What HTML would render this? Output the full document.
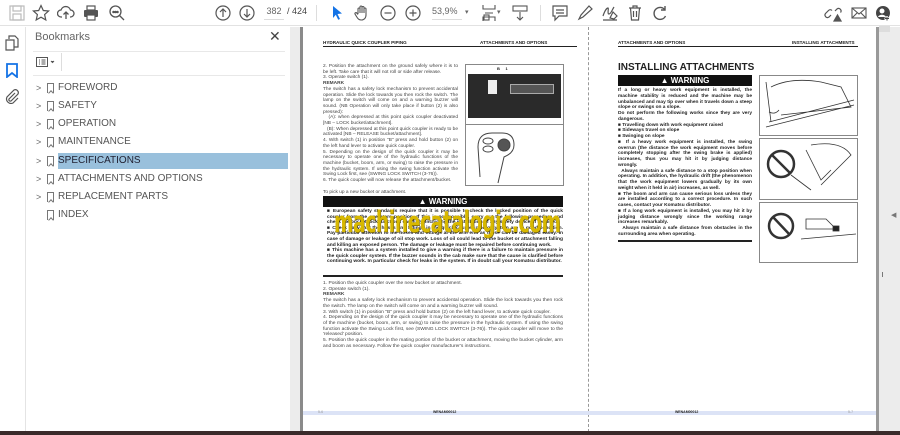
<!DOCTYPE html>
<html><head><meta charset="utf-8"><style>
*{margin:0;padding:0;box-sizing:border-box}
body{width:900px;height:435px;overflow:hidden;background:#fff;font-family:"Liberation Sans",sans-serif;position:relative}
.a{position:absolute}
.tb{left:0;top:0;width:900px;height:26px;background:#fff;border-bottom:1px solid #e2e2e2}
.ic{position:absolute;top:4px}
.bm{position:absolute;left:36px;font-size:10px;color:#555;height:16px;line-height:16px}
.bm .ch{position:absolute;left:0;top:0;font-size:9px;color:#666}
.bm .bk{position:absolute;left:11px;top:3px;width:7px;height:10px;border:1.2px solid #777;border-bottom:none}
.bm .bk:after{content:"";position:absolute;left:0.5px;bottom:-2px;width:3px;height:3px;border-left:1.2px solid #777;border-top:1.2px solid #777;transform:rotate(45deg)}
.bm .t{position:absolute;left:22px;top:0;white-space:nowrap}
.pg{font-size:4.8px;line-height:5.7px;color:#444;text-align:justify}
.hd{font-size:4.6px;font-weight:bold;color:#222}
.warn{background:#111;color:#fff;font-weight:bold;text-align:center}
.box{border:1px solid #888;background:#fff}
</style></head><body>
<div class="a tb">
<svg class="ic" style="left:8px" width="18" height="18" viewBox="0 0 18 18" fill="none" stroke="#bbb" stroke-width="1.2"><rect x="2" y="2" width="14" height="14"/><rect x="5" y="2" width="8" height="5"/><rect x="5" y="10" width="8" height="6"/></svg>
<svg class="ic" style="left:32px" width="18" height="18" viewBox="0 0 18 18" fill="none" stroke="#555" stroke-width="1.2"><path d="M9 1.5l2.3 5 5.3.5-4 3.6 1.2 5.3L9 13.2l-4.8 2.7 1.2-5.3-4-3.6 5.3-.5z"/></svg>
<svg class="ic" style="left:57px" width="18" height="18" viewBox="0 0 18 18" fill="none" stroke="#555" stroke-width="1.3"><path d="M5 13H4a3.5 3.5 0 010-7 5 5 0 019.5 0 3.5 3.5 0 010 7H13M9 15V8M6.5 10.5L9 8l2.5 2.5"/></svg>
<svg class="ic" style="left:82px" width="18" height="18" viewBox="0 0 18 18"><rect x="5" y="2" width="8" height="4" fill="none" stroke="#555" stroke-width="1.2"/><rect x="2" y="6" width="14" height="7" rx="1" fill="#555"/><rect x="5" y="11" width="8" height="5" fill="#fff" stroke="#555" stroke-width="1.2"/></svg>
<svg class="ic" style="left:108px" width="18" height="18" viewBox="0 0 18 18" fill="none" stroke="#555" stroke-width="1.3"><circle cx="7.5" cy="7.5" r="5.5"/><path d="M11.5 11.5L16 16"/><circle cx="5.5" cy="8" r=".6" fill="#555"/><circle cx="7.5" cy="8" r=".6" fill="#555"/><circle cx="9.5" cy="8" r=".6" fill="#555"/></svg>
<svg class="ic" style="left:214px" width="18" height="18" viewBox="0 0 18 18" fill="none" stroke="#555" stroke-width="1.2"><circle cx="9" cy="9" r="7"/><path d="M9 13V5M6 8l3-3 3 3"/></svg>
<svg class="ic" style="left:238px" width="18" height="18" viewBox="0 0 18 18" fill="none" stroke="#555" stroke-width="1.2"><circle cx="9" cy="9" r="7"/><path d="M9 5v8M6 10l3 3 3-3"/></svg>
<div class="a" style="left:264px;top:6px;width:20px;height:14px;font-size:9px;color:#666;border-bottom:1px solid #ddd;text-align:center">382</div>
<div class="a" style="left:287px;top:6px;font-size:9px;color:#444">/ 424</div>
<div class="a" style="left:316px;top:5px;width:1px;height:16px;background:#ddd"></div>
<svg class="ic" style="left:328px" width="18" height="18" viewBox="0 0 18 18"><path d="M5 2l9 7.5-4.5.5 2.5 5-1.8.8-2.4-5L5 14z" fill="#1473e6"/></svg>
<svg class="ic" style="left:353px" width="18" height="18" viewBox="0 0 18 18" fill="none" stroke="#555" stroke-width="1.1"><path d="M5 10V5a1 1 0 012 0v4V3a1 1 0 012 0v6V3.5a1 1 0 012 0V9V5a1 1 0 012 0v6c0 3-2 5-4.5 5S5 15 3.5 12.5L2 10a1 1 0 011.7-1L5 10.5"/></svg>
<svg class="ic" style="left:379px" width="18" height="18" viewBox="0 0 18 18" fill="none" stroke="#555" stroke-width="1.2"><circle cx="9" cy="9" r="7"/><path d="M5.5 9h7"/></svg>
<svg class="ic" style="left:404px" width="18" height="18" viewBox="0 0 18 18" fill="none" stroke="#555" stroke-width="1.2"><circle cx="9" cy="9" r="7"/><path d="M5.5 9h7M9 5.5v7"/></svg>
<div class="a" style="left:432px;top:6px;width:30px;height:14px;font-size:9px;color:#666;border-bottom:1px solid #ddd">53,9%</div>
<div class="a" style="left:465px;top:8px;font-size:7px;color:#666">▾</div>
<svg class="ic" style="left:481px" width="16" height="18" viewBox="0 0 16 18" fill="none" stroke="#555" stroke-width="1.1"><path d="M2 1v4h12V1M2 17v-4h12v4M4 9h8"/><rect x="3" y="11" width="5" height="5"/></svg>
<div class="a" style="left:497px;top:8px;font-size:7px;color:#666">▾</div>
<svg class="ic" style="left:511px" width="18" height="18" viewBox="0 0 18 18" fill="none" stroke="#555" stroke-width="1.1"><rect x="2" y="2" width="14" height="5"/><path d="M9 8v8M6 13l3 3 3-3"/></svg>
<div class="a" style="left:540px;top:5px;width:1px;height:16px;background:#ddd"></div>
<svg class="ic" style="left:551px" width="18" height="18" viewBox="0 0 18 18" fill="none" stroke="#555" stroke-width="1.2"><path d="M2 2h14v10H8l-4 4v-4H2z"/><path d="M5 6h8M5 9h8"/></svg>
<svg class="ic" style="left:576px" width="18" height="18" viewBox="0 0 18 18" fill="none" stroke="#555" stroke-width="1.2"><path d="M3 15l2-4 8-9 3 3-9 8z"/></svg>
<svg class="ic" style="left:601px" width="18" height="18" viewBox="0 0 18 18" fill="none" stroke="#555" stroke-width="1.2"><path d="M2 12c2-6 4-8 5-8s-1 6 1 6 3-4 5-7M9 14l3-6 4 4-3 3zM2 16h14"/></svg>
<svg class="ic" style="left:626px" width="18" height="18" viewBox="0 0 18 18" fill="none" stroke="#555" stroke-width="1.2"><path d="M3 4h12M7 4V2h4v2M4.5 4l1 12h7l1-12M7.5 7v6M10.5 7v6"/></svg>
<svg class="ic" style="left:651px" width="18" height="18" viewBox="0 0 18 18" fill="none" stroke="#555" stroke-width="1.4"><path d="M14 6a6 6 0 10.5 6"/><path d="M14 2v4h-4"/></svg>
<svg class="ic" style="left:824px" width="18" height="18" viewBox="0 0 18 18" fill="none" stroke="#555" stroke-width="1.2"><path d="M7 11l-2 2a2.5 2.5 0 01-3.5-3.5l3-3a2.5 2.5 0 013.5 0M11 7l2-2a2.5 2.5 0 013.5 3.5"/><path d="M10 17l3.5-6 3.5 6z" fill="#555"/></svg>
<svg class="ic" style="left:850px" width="18" height="18" viewBox="0 0 18 18" fill="none" stroke="#555" stroke-width="1.1"><rect x="2" y="4" width="14" height="10"/><path d="M2 4l7 6 7-6M2 14l5-5M16 14l-5-5"/></svg>
<svg class="ic" style="left:874px" width="18" height="18" viewBox="0 0 18 18"><circle cx="9" cy="9" r="7" fill="#444"/><circle cx="8" cy="7" r="2.5" fill="#fff"/><path d="M4 13c1-3 7-3 8 0" fill="#fff"/><path d="M13 12v5M10.5 14.5h5" stroke="#fff" stroke-width="2"/><path d="M13 12.5v4M11 14.5h4" stroke="#444" stroke-width="1"/></svg>
</div>
<div class="a" style="left:0;top:27px;width:26px;height:405px;background:#fff;border-right:1px solid #e4e4e4"></div>
<svg class="a" style="left:5px;top:35px" width="14" height="16" viewBox="0 0 14 16" fill="none" stroke="#555" stroke-width="1.2"><path d="M4 4V1h6l3 3v8H9"/><path d="M1 5h8v10H1z"/></svg>
<svg class="a" style="left:6px;top:63px" width="12" height="15" viewBox="0 0 12 15" fill="none" stroke="#1473e6" stroke-width="1.8"><path d="M1 1h10v13l-5-4-5 4z"/></svg>
<svg class="a" style="left:4px;top:88px" width="16" height="16" viewBox="0 0 16 16" fill="none" stroke="#555" stroke-width="1.2"><path d="M11 5l-6 6a1.5 1.5 0 002 2l7-7a3 3 0 00-4-4l-7 7a4.5 4.5 0 006 6l5-5"/></svg>
<div class="a" style="left:27px;top:27px;width:263px;height:405px;background:#fff"></div>
<div class="a" style="left:35px;top:31px;font-size:11px;color:#666">Bookmarks</div>
<div class="a" style="left:269px;top:28px;font-size:14px;color:#444">✕</div>
<div class="a" style="left:33px;top:51px;width:252px;height:1px;background:#e8e8e8"></div>
<svg class="a" style="left:36px;top:56px" width="24" height="12" viewBox="0 0 24 12" fill="none" stroke="#555" stroke-width="1"><rect x=".5" y="1.5" width="11" height="9"/><path d="M3 4h1M3 6h1M3 8h1M5.5 4h4M5.5 6h4M5.5 8h4"/><path d="M15 5l1.5 1.5L18 5" fill="#555"/></svg>
<div class="a" style="left:61px;top:53px;width:1px;height:18px;background:#ddd"></div>
<div class="a" style="left:33px;top:75px;width:252px;height:1px;background:#e8e8e8"></div>
<div class="a" style="left:58px;top:153px;width:230px;height:16px;background:#99c0dc"></div>
<div class="bm" style="top:80px"><span class="ch">&gt;</span><span class="bk"></span><span class="t">FOREWORD</span></div>
<div class="bm" style="top:98px"><span class="ch">&gt;</span><span class="bk"></span><span class="t">SAFETY</span></div>
<div class="bm" style="top:116px"><span class="ch">&gt;</span><span class="bk"></span><span class="t">OPERATION</span></div>
<div class="bm" style="top:134px"><span class="ch">&gt;</span><span class="bk"></span><span class="t">MAINTENANCE</span></div>
<div class="bm" style="top:153px"><span class="ch">&gt;</span><span class="bk"></span><span class="t" style="color:#223">SPECIFICATIONS</span></div>
<div class="bm" style="top:171px"><span class="ch">&gt;</span><span class="bk"></span><span class="t">ATTACHMENTS AND OPTIONS</span></div>
<div class="bm" style="top:189px"><span class="ch">&gt;</span><span class="bk"></span><span class="t">REPLACEMENT PARTS</span></div>
<div class="bm" style="top:207px"><span class="bk"></span><span class="t">INDEX</span></div>
<div class="a" style="left:290px;top:27px;width:10px;height:405px;background:#ececec"></div>
<div class="a" style="left:300px;top:27px;width:3px;height:405px;background:#8a8a8a"></div>
<div class="a" style="left:303px;top:27px;width:573px;height:405px;background:#fff"></div>
<div class="a" style="left:588px;top:27px;width:0;height:405px;border-left:1px dashed #999"></div>
<div class="a" style="left:876px;top:27px;width:3px;height:405px;background:#999"></div>
<div class="a" style="left:879px;top:27px;width:21px;height:405px;background:#ececec"></div>
<div class="a" style="left:879px;top:26px;width:11px;height:6px;background:#ddd"></div>
<div class="a" style="left:891px;top:211px;font-size:7px;color:#777">◀</div>
<div class="a" style="left:882px;top:272px;width:1px;height:5px;background:#777"></div>
<div class="a" style="left:0;top:431px;width:900px;height:4px;background:#3a2b2b"></div>
<div class="a" style="left:303px;top:411px;width:573px;height:4px;background:#dce3f6"></div>
<div class="a hd" style="left:318px;top:410px;font-size:3.5px;color:#999;font-weight:normal">5-6</div>
<div class="a hd" style="left:433px;top:410px;font-size:3.5px">WENAM00012</div>
<div class="a hd" style="left:675px;top:410px;font-size:3.5px">WENAM00012</div>
<div class="a hd" style="left:848px;top:410px;font-size:3.5px;color:#999;font-weight:normal">5-7</div>

<div class="a hd" style="left:323px;top:40px">HYDRAULIC QUICK COUPLER PIPING</div>
<div class="a hd" style="left:480px;top:40px">ATTACHMENTS AND OPTIONS</div>
<div class="a" style="left:323px;top:46px;width:254px;height:1px;background:#222"></div>
<div class="a pg" style="left:323px;top:64px;width:135px">
2. Position the attachment on the ground safely where it is to be left. Take care that it will not roll or side after release.<br>3. Operate switch (1).<br><b>REMARK</b><br>The switch has a safety lock mechanism to prevent accidental operation. Slide the lock towards you then rock the switch. The lamp on the switch will come on and a warning buzzer will sound. (NB Operation will only take place if button (2) is also pressed):<br>&nbsp;&nbsp;&nbsp;(A): when depressed at this point quick coupler deactivated [NB – LOCK bucket/attachment].<br>&nbsp;&nbsp;&nbsp;(B): When depressed at this point quick coupler is ready to be activated [NB – RELEASE bucket/attachment].<br>4. With switch (1) in position "B" press and hold button (2) on the left hand lever to activate quick coupler.<br>5. Depending on the design of the quick coupler it may be necessary to operate one of the hydraulic functions of the machine (bucket, boom, arm, or swing) to raise the pressure in the hydraulic system. If using the swing function activate the Swing Lock first, see (SWING LOCK SWITCH (3-76)).<br>6. The quick coupler will now release the attachment/bucket.</div>
<div class="a box" style="left:465px;top:64px;width:99px;height:61px"></div>
<div class="a" style="left:468px;top:74px;width:93px;height:44px;background:#2a2a2a"></div>
<div class="a" style="left:510px;top:84px;width:44px;height:10px;background:#555;border:1px solid #aaa"></div>
<div class="a" style="left:488px;top:80px;width:9px;height:14px;background:#eee"></div>
<div class="a hd" style="left:497px;top:66px;font-size:4px">B&nbsp;&nbsp;&nbsp;&nbsp;&nbsp;1</div>
<div class="a box" style="left:465px;top:124px;width:99px;height:62px"></div>
<svg class="a" style="left:470px;top:127px" width="60" height="58" viewBox="0 0 60 58" fill="none" stroke="#444" stroke-width="1"><path d="M10 50L8 20q0-14 14-14h10q12 0 12 12 0 8-10 12l-6 26"/><circle cx="34" cy="18" r="6" fill="#555"/><ellipse cx="18" cy="14" rx="5" ry="3"/><ellipse cx="18" cy="22" rx="5" ry="3"/></svg>
<div class="a pg" style="left:323px;top:190px">To pick up a new bucket or attachment.</div>
<div class="a warn" style="left:323px;top:196px;width:240px;height:11px;font-size:8px;line-height:11px">▲ WARNING</div>
<div class="a pg" style="left:327px;top:209px;width:236px;font-weight:bold;color:#222;line-height:5.6px;font-size:4.9px">
■ European safety standards require that it is possible to check the locked position of the quick coupler from the operators position. If this is not possible, carry out the following procedure and check the bucket lock functions carefully, including the installation of any safety device, if required.<br>■ Check daily that the hoses and fittings in the quick coupler piping system are in good condition. Pay particular attention to the hoses and fittings at the arm end as these can be damaged easily. In case of damage or leakage of oil stop work. Loss of oil could lead to the bucket or attachment falling and killing an exposed person. The damage or leakage must be repaired before continuing work.<br>■ This machine has a system installed to give a warning if there is a failure to maintain pressure in the quick coupler system. If the buzzer sounds in the cab make sure that the cause is clarified before continuing work. In particular check for leaks in the system. If in doubt call your Komatsu distributor.</div>
<div class="a" style="left:323px;top:275px;width:240px;height:2px;background:#222"></div>
<div class="a pg" style="left:323px;top:281px;width:240px;font-size:4.9px">
1. Position the quick coupler over the new bucket or attachment.<br>2. Operate switch (1).<br><b>REMARK</b><br>The switch has a safety lock mechanism to prevent accidental operation. Slide the lock towards you then rock the switch. The lamp on the switch will come on and a warning buzzer will sound.<br>3. With switch (1) in position "B" press and hold button (2) on the left hand lever, to activate quick coupler.<br>4. Depending on the design of the quick coupler it may be necessary to operate one of the hydraulic functions of the machine (bucket, boom, arm, or swing) to raise the pressure in the hydraulic system. If using the swing function activate the Swing Lock first, see (SWING LOCK SWITCH (3-76)). The quick coupler will move to the 'released' position.<br>5. Position the quick coupler in the mating portion of the bucket or attachment, moving the bucket cylinder, arm and boom as necessary. Follow the quick coupler manufacturer's instructions.</div>
<div class="a" style="left:334px;top:205px;font-size:29px;font-weight:bold;font-family:'DejaVu Sans',sans-serif;color:#d8b800;letter-spacing:-0.5px;text-shadow:0.6px 0.6px 0 #4a3c00;white-space:nowrap;transform:scaleX(0.64);transform-origin:0 0">machinecatalogic.com</div>

<div class="a hd" style="left:618px;top:40px">ATTACHMENTS AND OPTIONS</div>
<div class="a hd" style="left:792px;top:40px">INSTALLING ATTACHMENTS</div>
<div class="a" style="left:618px;top:46px;width:240px;height:1px;background:#222"></div>
<div class="a" style="left:618px;top:62px;font-size:10px;font-weight:bold;color:#222">INSTALLING ATTACHMENTS</div>
<div class="a warn" style="left:618px;top:75px;width:134px;height:11px;font-size:8px;line-height:11px">▲ WARNING</div>
<div class="a pg" style="left:618px;top:88px;width:134px;font-weight:bold;color:#222;line-height:5.75px;font-size:4.8px">
If a long or heavy work equipment is installed, the machine stability is reduced and the machine may be unbalanced and may tip over when it travels down a steep slope or swings on a slope.<br>Do not perform the following works since they are very dangerous.<br>■ Travelling down with work equipment raised<br>■ Sideways travel on slope<br>■ Swinging on slope<br>■ If a heavy work equipment is installed, the swing overrun (the distance the work equipment moves before completely stopping after the swing brake is applied) increases, thus you may hit it by judging distance wrongly.<br>&nbsp;&nbsp;Always maintain a safe distance to a stop position when operating. In addition, the hydraulic drift (the phenomenon that the work equipment lowers gradually by its own weight when it held in air) increases, as well.<br>■ The boom and arm can cause serious loss unless they are installed according to a correct procedure. In such cases, contact your Komatsu distributor.<br>■ If a long work equipment is installed, you may hit it by judging distance wrongly since the working range increases remarkably.<br>&nbsp;&nbsp;Always maintain a safe distance from obstacles in the surrounding area when operating.</div>
<div class="a" style="left:618px;top:240px;width:134px;height:2px;background:#222"></div>
<div class="a box" style="left:759px;top:75px;width:99px;height:61px"></div>
<svg class="a" style="left:761px;top:77px" width="95" height="57" viewBox="0 0 95 57" fill="none" stroke="#333" stroke-width=".8"><path d="M5 5l5 40M10 10q20-10 50-5l20 5 10 20-70 8M8 45l85-22M5 50l88-22"/><path d="M8 35q6 3 10-2"/></svg>
<div class="a box" style="left:759px;top:138px;width:99px;height:62px"></div>
<svg class="a" style="left:761px;top:140px" width="95" height="58" viewBox="0 0 95 58" fill="none" stroke="#333" stroke-width=".8"><circle cx="20" cy="24" r="13" stroke-width="2.5"/><path d="M11 15l18 18" stroke-width="2.5"/><path d="M45 10l15 30 10-10M30 35l20 15M50 5q30-5 40 10l-30 30"/></svg>
<div class="a box" style="left:759px;top:202px;width:99px;height:61px"></div>
<svg class="a" style="left:761px;top:204px" width="95" height="57" viewBox="0 0 95 57" fill="none" stroke="#333" stroke-width=".8"><circle cx="20" cy="22" r="12" stroke-width="2.5"/><path d="M12 13l17 18" stroke-width="2.5"/><path d="M45 15h20l10 10h-30zM40 35l55-5" /><rect x="72" y="22" width="6" height="5" fill="#222"/></svg>
</body></html>
